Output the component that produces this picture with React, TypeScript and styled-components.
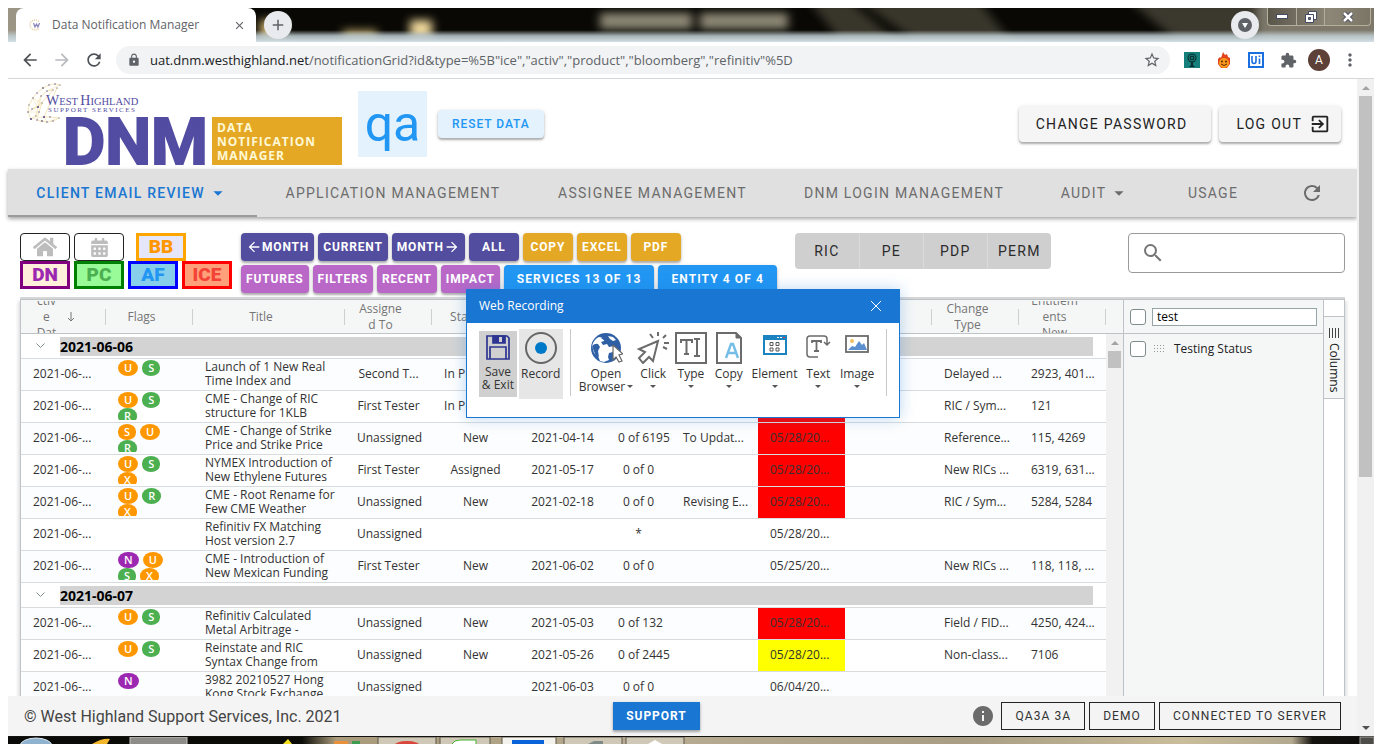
import React from "react";
import styled, { createGlobalStyle } from "styled-components";
import {
  MdArrowBack,
  MdArrowForward,
  MdArrowDropDown,
  MdClose,
  MdExitToApp,
  MdExtension,
  MdInfo,
  MdLock,
  MdMoreVert,
  MdRefresh,
  MdSearch,
  MdStarBorder,
  MdAdd,
} from "react-icons/md";
import { FaHome, FaCalendarAlt } from "react-icons/fa";

const ui = '"Open Sans", "Noto Sans", sans-serif';
const roboto = 'Roboto, "Liberation Sans", sans-serif';

const GlobalStyle = createGlobalStyle`
  * { box-sizing: border-box; }
  body { margin: 0; background: #fff; font-family: ${roboto}; color: #222; }
  button, input { font-family: inherit; margin: 0; }
  button { cursor: pointer; }
`;

const Screen = styled.div`
  height: 100vh;
  padding: 8px 8px 0;
  display: flex;
  flex-direction: column;
  overflow: hidden;
`;

/* ---------- browser frame ---------- */

const TitleBar = styled.header`
  position: relative;
  flex: none;
  height: 34px;
  padding-left: 8px;
  display: flex;
  align-items: center;
  overflow: hidden;
  background: #0b0a07;
`;

const Wallpaper = styled.svg`
  position: absolute;
  inset: 0;
  width: 100%;
  height: 100%;
`;

const BrowserTab = styled.div`
  position: relative;
  width: 240px;
  height: 34px;
  padding: 0 10px 0 13px;
  display: flex;
  align-items: center;
  gap: 9px;
  background: #fff;
  border-radius: 8px 8px 0 0;
  font: 12px/16px ${ui};
  color: #5f6368;
  span { flex: 1; }
`;

const PlainButton = styled.button`
  display: flex;
  align-items: center;
  justify-content: center;
  padding: 0;
  border: 0;
  background: none;
  color: inherit;
`;

const RoundButton = styled(PlainButton)`
  position: relative;
  width: 28px;
  height: 28px;
  margin-left: 8px;
  border-radius: 50%;
  background: #e8eaed;
  color: #5f6368;
`;

const TitleSpacer = styled.div`
  flex: 1;
`;

const WindowButtons = styled.div`
  position: relative;
  align-self: flex-start;
  display: flex;
  height: 18px;
  margin: 0 3px 0 8px;
  border: 1px solid #b4ae9c;
  border-top: 0;
  border-radius: 0 0 4px 4px;
  background: linear-gradient(90deg, #5a564a, #8d8778 60%, #7b7566);
`;

const WindowButton = styled(PlainButton)<{ $wide?: boolean }>`
  width: ${(p) => (p.$wide ? 46 : 28)}px;
  & + & { border-left: 1px solid #b4ae9c; }
`;

const AddressBar = styled.div`
  flex: none;
  height: 37px;
  padding: 0 12px;
  display: flex;
  align-items: center;
  background: #fff;
  border-bottom: 1px solid #d5d7da;
  color: #5f6368;
`;

const NavButton = styled(PlainButton)<{ $off?: boolean }>`
  width: 20px;
  height: 28px;
  margin-right: 12px;
  color: ${(p) => (p.$off ? "#b9bbbe" : "#4d5156")};
`;

const Omnibox = styled.div`
  flex: 1;
  height: 28px;
  padding: 0 9px 0 11px;
  display: flex;
  align-items: center;
  gap: 9px;
  border-radius: 14px;
  background: #f1f3f4;
  font: 13px/18px ${ui};
  color: #5f6368;
  p { flex: 1; margin: 0; white-space: nowrap; overflow: hidden; }
  b { font-weight: 400; color: #202124; }
`;

const Extensions = styled.div`
  display: flex;
  align-items: center;
  gap: 8px;
  margin-left: 10px;
`;

const ExtButton = styled(PlainButton)`
  width: 24px;
  height: 24px;
`;

const Avatar = styled.span`
  width: 22px;
  height: 22px;
  border-radius: 50%;
  background: #5d4037;
  color: #fff;
  font: 12px/22px ${roboto};
  text-align: center;
`;

const Viewport = styled.div`
  position: relative;
  flex: 1;
  min-height: 0;
  display: flex;
`;

const ScrollTrack = styled.div`
  flex: none;
  width: 17px;
  display: flex;
  flex-direction: column;
  align-items: center;
  background: #f1f1f1;
`;

const ScrollArrow = styled.span<{ $down?: boolean }>`
  width: 17px;
  height: 17px;
  display: flex;
  align-items: center;
  justify-content: center;
  &::after {
    content: "";
    border: 4px solid transparent;
    ${(p) => (p.$down ? "border-top-color: #505050; border-bottom: 0;" : "border-bottom-color: #a3a3a3; border-top: 0;")}
  }
`;

const ScrollThumb = styled.span<{ $size: string }>`
  width: 13px;
  height: ${(p) => p.$size};
  margin-bottom: auto;
  background: #c1c1c1;
`;

/* ---------- application ---------- */

const AppPage = styled.main`
  flex: 1;
  min-width: 0;
  display: flex;
  flex-direction: column;
  background: #fff;
`;

const AppHeader = styled.div`
  flex: none;
  height: 90px;
  padding: 0 16px 0 14px;
  display: flex;
  align-items: center;
`;

const Logo = styled.svg`
  width: 322px;
  height: 90px;
  flex: none;
`;

const Env = styled.div`
  width: 69px;
  height: 66px;
  margin-left: 14px;
  background: #e3f2fd;
  color: #2196f3;
  font: 50px/66px ${roboto};
  text-align: center;
`;

const RaisedButton = styled.button`
  border: 0;
  border-radius: 4px;
  box-shadow: 0 2px 2px rgba(0, 0, 0, 0.25), 0 1px 4px rgba(0, 0, 0, 0.15);
  font-family: ${roboto};
  font-weight: 500;
  white-space: nowrap;
`;

const ResetButton = styled(RaisedButton)`
  height: 28px;
  margin: 0 auto 0 11px;
  padding: 0 14px;
  background: #e3f2fd;
  color: #2196f3;
  font-size: 12px;
  letter-spacing: 0.08em;
`;

const AccountButton = styled(RaisedButton)<{ $icon?: boolean }>`
  height: 36px;
  margin-left: 8px;
  padding: 0 ${(p) => (p.$icon ? 10 : 24)}px 0 17px;
  display: flex;
  align-items: center;
  gap: 7px;
  background: #f5f5f5;
  color: #222;
  font-size: 14px;
  font-weight: 400;
  letter-spacing: 0.09em;
`;

const TabBar = styled.nav`
  flex: none;
  height: 48px;
  display: flex;
  background: #e0e0e0;
  box-shadow: 0 2px 4px rgba(0, 0, 0, 0.35);
`;

const NavTab = styled.a<{ $share: number; $active?: boolean }>`
  flex: ${(p) => p.$share} 1 0;
  display: flex;
  align-items: center;
  justify-content: center;
  gap: 2px;
  box-shadow: ${(p) => (p.$active ? "inset 0 -2px 0 #9b9b9b" : "none")};
  color: ${(p) => (p.$active ? "#1976d2" : "#6c6c6c")};
  font-size: 14px;
  font-weight: ${(p) => (p.$active ? 500 : 400)};
  letter-spacing: 0.09em;
  white-space: nowrap;
  text-decoration: none;
`;

const Controls = styled.section`
  flex: none;
  height: 80px;
  padding: 16px 12px 0;
  display: flex;
  align-items: flex-start;
`;

const Stack = styled.div<{ $gap: number }>`
  display: flex;
  flex-direction: column;
  gap: ${(p) => p.$gap}px;
  margin-right: 9px;
`;

const ButtonRow = styled.div`
  display: flex;
  gap: 4px;
`;

const IconTile = styled(PlainButton)`
  width: 50px;
  height: 28px;
  border: 1px solid #222;
  border-radius: 4px;
  color: #bdbdbd;
`;

const SourceTile = styled.button<{ $line: string; $fill: string; $ink: string; $apart?: boolean }>`
  width: 50px;
  height: 28px;
  margin-left: ${(p) => (p.$apart ? 8 : 0)}px;
  padding: 0;
  border: 3px solid ${(p) => p.$line};
  background: ${(p) => p.$fill};
  color: ${(p) => p.$ink};
  font: 900 19px/22px ${roboto};
`;

const ToolButton = styled(RaisedButton)<{ $tone: string; $roomy?: boolean }>`
  height: 28px;
  min-width: 50px;
  padding: 0 ${(p) => (p.$roomy ? 13 : 5)}px;
  display: flex;
  align-items: center;
  justify-content: center;
  background: ${(p) => p.$tone};
  color: #fff;
  font-size: 12px;
  font-weight: 700;
  letter-spacing: ${(p) => (p.$roomy ? "0.09em" : "0.07em")};
`;

const Segments = styled.div`
  display: flex;
  flex: none;
  margin-left: 9px;
  border-radius: 4px;
  overflow: hidden;
`;

const Segment = styled.button`
  width: 64px;
  height: 36px;
  padding: 0;
  border: 0;
  background: #cfcfcf;
  color: #2b2b2b;
  font-size: 14px;
  letter-spacing: 0.09em;
  & + & { border-left: 1px solid #dadada; }
`;

const SearchBox = styled.label`
  flex: none;
  display: flex;
  align-items: center;
  width: 217px;
  height: 40px;
  margin-left: auto;
  padding: 0 12px;
  border: 1px solid #9a9a9a;
  border-radius: 4px;
  color: #757575;
  input { flex: 1; min-width: 0; border: 0; outline: 0; background: none; font-size: 16px; }
`;

/* ---------- grid ---------- */

const Grid = styled.section`
  flex: 1;
  min-height: 0;
  margin: 2px 12px 0;
  display: flex;
  overflow: hidden;
  border: 1px solid #bdc3c7;
  border-bottom: 0;
  box-shadow: 0 -2px 0 #d6d6d6, 2px 2px 3px rgba(0, 0, 0, 0.12), -2px 2px 3px rgba(0, 0, 0, 0.12);
  font: 12px/16px ${ui};
  color: #333;
`;

const TableWrap = styled.div`
  flex: 1;
  min-width: 0;
  overflow: hidden;
`;

const Table = styled.table`
  width: 100%;
  table-layout: fixed;
  border-collapse: separate;
  border-spacing: 0;
`;

const HeadCell = styled.th`
  height: 34px;
  padding: 0 28px 0 12px;
  border-bottom: 1px solid #bdc3c7;
  background: linear-gradient(#ccd0d2, #ccd0d2) right center / 1px 16px no-repeat, #f5f7f7;
  color: #757575;
  font-weight: 400;
`;

const HeadText = styled.div`
  height: 32px;
  display: flex;
  align-items: center;
  justify-content: center;
  gap: 10px;
  overflow: hidden;
  text-align: center;
  word-break: break-word;
  svg { flex: none; }
`;

const GroupCell = styled.td`
  height: 25px;
  padding: 0 13px 0 15px;
  border-bottom: 1px solid #d9dcde;
`;

const GroupLine = styled.div`
  display: flex;
  align-items: center;
  gap: 15px;
`;

const GroupLabel = styled.strong`
  flex: 1;
  height: 19px;
  background: #d3d3d3;
  color: #000;
  font: 700 14px/19px ${ui};
`;

const BodyRow = styled.tr<{ $shade: boolean }>`
  background: ${(p) => (p.$shade ? "#fcfdfe" : "#fff")};
`;

const Cell = styled.td<{ $fill?: string; $center?: boolean }>`
  height: 32px;
  padding: 0 12px 2px;
  border-bottom: 1px solid #d9dcde;
  background: ${(p) => p.$fill || "transparent"};
  text-align: ${(p) => (p.$center ? "center" : "left")};
  white-space: nowrap;
`;

const TitleText = styled.div`
  height: 29px;
  margin-right: -8px;
  padding-top: 1px;
  overflow: hidden;
  line-height: 14px;
`;

const FlagList = styled.div`
  height: 29px;
  padding-top: 1px;
  display: flex;
  flex-wrap: wrap;
  align-content: flex-start;
  column-gap: 4px;
  overflow: hidden;
`;

const Flag = styled.span<{ $tone: string }>`
  height: 16px;
  padding: 0 6px;
  border-radius: 10px / 8px;
  background: ${(p) => p.$tone};
  color: #fff;
  font: 600 11px/16px ${ui};
`;

const GridScroll = styled(ScrollTrack)`
  &::before {
    content: "";
    flex: none;
    width: 100%;
    height: 33px;
    background: #f5f7f7;
    border-bottom: 1px solid #bdc3c7;
  }
`;

const ColumnPanel = styled.aside`
  flex: none;
  width: 201px;
  border: solid #bdc3c7;
  border-width: 0 1px;
  background: #f5f7f7;
  color: #222;
`;

const PanelRow = styled.div<{ $head?: boolean }>`
  height: ${(p) => (p.$head ? 34 : 30)}px;
  padding: 0 6px;
  display: flex;
  align-items: center;
  gap: ${(p) => (p.$head ? 6 : 8)}px;
  border-bottom: ${(p) => (p.$head ? "1px solid #bdc3c7" : "0")};
`;

const Check = styled.input`
  appearance: none;
  flex: none;
  width: 16px;
  height: 16px;
  border: 1px solid #7f8c8d;
  border-radius: 3px;
  background: #fff;
`;

const PanelInput = styled.input`
  flex: 1;
  min-width: 0;
  height: 18px;
  padding: 0 4px;
  border: 1px solid #95a5a6;
  background: #fff;
  color: #000;
  font: 12px/16px ${ui};
`;

const SideTabs = styled.div`
  flex: none;
  width: 20px;
  padding-top: 16px;
  background: #fff;
`;

const SideTab = styled.button`
  width: 100%;
  height: 83px;
  padding: 11px 0 0;
  display: flex;
  flex-direction: column;
  align-items: center;
  gap: 4px;
  border: solid #bdc3c7;
  border-width: 1px 0;
  background: #f5f7f7;
  color: #222;
  font: 12px/16px ${ui};
  span { writing-mode: vertical-rl; }
`;

/* ---------- footer ---------- */

const Footer = styled.footer`
  position: relative;
  flex: none;
  height: 40px;
  padding: 0 16px;
  display: flex;
  align-items: center;
  justify-content: space-between;
  background: #f4f4f4;
  color: #444;
  font-size: 16px;
`;

const SupportButton = styled(RaisedButton)`
  height: 28px;
  padding: 0 13px;
  border-radius: 0;
  background: #1976d2;
  color: #fff;
  font-size: 12px;
  font-weight: 700;
  letter-spacing: 0.08em;
`;

const StatusList = styled.div`
  display: flex;
  align-items: center;
  gap: 4px;
  color: #6b6b6b;
`;

const StatusButton = styled.button`
  height: 28px;
  padding: 0 13px;
  border: 1px solid #222;
  background: none;
  color: #333;
  font: 12px/16px ${roboto};
  letter-spacing: 0.09em;
`;

const InfoMark = styled(MdInfo)`
  margin-right: 2px;
`;

const Taskbar = styled.svg`
  display: block;
  flex: none;
  width: 100%;
  height: 8px;
`;

/* ---------- recorder window ---------- */

const Recorder = styled.section`
  position: absolute;
  top: 210px;
  left: 458px;
  width: 434px;
  height: 129px;
  border: 1px solid #1976d2;
  background: #fff;
  box-shadow: 0 0 14px rgba(25, 118, 210, 0.3);
  font: 12px/13px ${ui};
  color: #333;
`;

const RecorderTitle = styled.div`
  height: 33px;
  padding: 0 17px 2px 12px;
  display: flex;
  align-items: center;
  justify-content: space-between;
  background: #1976d2;
  color: #fff;
`;

const RecorderTools = styled.div`
  display: flex;
  align-items: flex-start;
  padding: 6px 12px 0;
`;

const Tool = styled.button<{ $w: number; $fill?: string; $short?: boolean }>`
  width: ${(p) => p.$w}px;
  height: ${(p) => (p.$short ? 66 : 70)}px;
  margin: ${(p) => (p.$short ? "2px 2px 0 0" : "0")};
  padding: ${(p) => (p.$short ? 2 : 1)}px 0 0;
  display: flex;
  flex-direction: column;
  align-items: center;
  gap: ${(p) => (p.$short ? 2 : 3)}px;
  border: 0;
  background: ${(p) => p.$fill || "none"};
  color: #333;
  font: 12px/13px ${ui};
  white-space: nowrap;
  svg { flex: none; }
`;

const ToolLabel = styled.span`
  display: flex;
  flex-direction: column;
  align-items: center;
`;

const WithCaret = styled.span`
  display: flex;
  align-items: center;
  gap: 2px;
`;

const Caret = styled.i`
  border: 3px solid transparent;
  border-top-color: #555;
  border-bottom: 0;
`;

const CaretLine = styled.span`
  height: 13px;
  display: flex;
  align-items: center;
`;

const Rule = styled.span<{ $before: number; $after: number }>`
  width: 1px;
  height: 67px;
  margin: 0 ${(p) => p.$after}px 0 ${(p) => p.$before}px;
  background: #c8c8c8;
`;

/* ---------- data ---------- */

const orange = "#ff9800";
const green = "#4caf50";
const purple = "#9c27b0";
type FlagDef = [string, string];
const U: FlagDef = ["U", orange];
const S: FlagDef = ["S", green];
const R: FlagDef = ["R", green];
const X: FlagDef = ["X", orange];
const N: FlagDef = ["N", purple];
const SO: FlagDef = ["S", orange];

interface Notice {
  flags: FlagDef[];
  title: [string, string];
  who: string;
  status: string;
  date: string;
  count: string;
  note: string;
  due: string;
  fill?: string;
  change: string;
  codes: string;
}

const row = (
  flags: FlagDef[],
  title: [string, string],
  who: string,
  status: string,
  date: string,
  count: string,
  note: string,
  due: string,
  fill: string | undefined,
  change: string,
  codes: string
): Notice => ({ flags, title, who, status, date, count, note, due, fill, change, codes });

const d28 = "05/28/20...";
const un = "Unassigned";

const groups: { day: string; rows: Notice[] }[] = [
  {
    day: "2021-06-06",
    rows: [
      row([U, S], ["Launch of 1 New Real", "Time Index and"], "Second T...", "In Progress", "", "", "", "", "red", "Delayed ...", "2923, 401..."),
      row([U, S, R], ["CME - Change of RIC", "structure for 1KLB"], "First Tester", "In Progress", "", "", "", "", "red", "RIC / Sym...", "121"),
      row([SO, U, R], ["CME - Change of Strike", "Price and Strike Price"], un, "New", "2021-04-14", "0 of 6195", "To Updat...", d28, "red", "Reference...", "115, 4269"),
      row([U, S, X], ["NYMEX Introduction of", "New Ethylene Futures"], "First Tester", "Assigned", "2021-05-17", "0 of 0", "", d28, "red", "New RICs ...", "6319, 631..."),
      row([U, R, X], ["CME - Root Rename for", "Few CME Weather"], un, "New", "2021-02-18", "0 of 0", "Revising E...", d28, "red", "RIC / Sym...", "5284, 5284"),
      row([], ["Refinitiv FX Matching", "Host version 2.7"], un, "", "", "*", "", d28, undefined, "", ""),
      row([N, U, S, X], ["CME - Introduction of", "New Mexican Funding"], "First Tester", "New", "2021-06-02", "0 of 0", "", "05/25/20...", undefined, "New RICs ...", "118, 118, ..."),
    ],
  },
  {
    day: "2021-06-07",
    rows: [
      row([U, S], ["Refinitiv Calculated", "Metal Arbitrage -"], un, "New", "2021-05-03", "0 of 132", "", d28, "red", "Field / FID...", "4250, 424..."),
      row([U, S], ["Reinstate and RIC", "Syntax Change from"], un, "New", "2021-05-26", "0 of 2445", "", d28, "yellow", "Non-class...", "7106"),
      row([N], ["3982 20210527 Hong", "Kong Stock Exchange"], un, "", "2021-06-03", "0 of 0", "", "06/04/20...", undefined, "", ""),
    ],
  },
];

const columns: [string, number][] = [
  ["", 85], ["Flags", 87], ["Title", 152], ["Assigned To", 87], ["Status", 87], ["", 87],
  ["", 65], ["", 87], ["", 87], ["", 87], ["Change Type", 87], ["Entitlements New", 87],
];

/* ---------- drawings ---------- */

const globe: [number, number][] = [
  [38, 6], [33, 5], [27, 6], [21, 9], [15, 14], [11, 19], [7, 26], [6, 33], [9, 40], [14, 37], [19, 17], [25, 12], [31, 11],
  [16, 28], [10, 30], [20, 24], [17, 33], [15, 41], [20, 42], [25, 43], [31, 42], [37, 39], [28, 38], [22, 38], [35, 9],
];

const LogoArt = () => (
  <Logo viewBox="0 0 322 90" role="img" aria-label="West Highland Support Services DNM">
    <polyline points={globe.map((p) => p.join(",")).join(" ")} fill="none" stroke="#f3e6bb" strokeWidth="1" />
    <polyline points="38,6 25,12 19,17 15,24 20,24 10,19 16,28 6,33 17,33 9,40 22,38 25,43 37,39" fill="none" stroke="#f6edcf" strokeWidth="1" />
    {globe.map(([x, y], i) => (
      <circle key={i} cx={x} cy={y} r={i % 5 === 3 ? 1.1 : 0.7} fill={i % 3 ? "#5b4a83" : "#8a7f86"} />
    ))}
    <g fill="#524ca2" fontFamily="'Liberation Serif', serif">
      <text x="24" y="26" fontSize="14">W<tspan fontSize="10.500">EST </tspan>H<tspan fontSize="10.500">IGHLAND</tspan></text>
      <text x="26" y="33" fontSize="7" letterSpacing="1.500">SUPPORT SERVICES</text>
    </g>
    <text x="41" y="85" fontSize="65" fontWeight="700" fontFamily="Roboto, sans-serif" fill="#524ca2" stroke="#524ca2" strokeWidth="2">DNM</text>
    <rect x="190" y="38" width="130" height="48" fill="#e4a825" />
    <g fill="#fff8d5" fontFamily="'Open Sans', sans-serif" fontSize="12" fontWeight="700" letterSpacing="1">
      <text x="195" y="53">DATA</text>
      <text x="195" y="67">NOTIFICATION</text>
      <text x="195" y="81">MANAGER</text>
    </g>
  </Logo>
);

const FavIcon = () => (
  <svg width="14" height="14" viewBox="0 0 14 14">
    <circle cx="6" cy="7" r="5" fill="none" stroke="#e3cda3" strokeWidth="1.500" strokeDasharray="1 1" />
    <rect x="4" y="4" width="9" height="6" fill="#fff" />
    <path d="M4.500 5l1.500 4 1.500-3 1.500 3 1.500-4" fill="none" stroke="#8a82bb" strokeWidth="1.200" />
  </svg>
);

const TitleArt = () => (
  <Wallpaper viewBox="0 0 1366 34" preserveAspectRatio="none">
    <defs>
      <filter id="soft" x="-20%" y="-50%" width="140%" height="200%"><feGaussianBlur stdDeviation="5 4" /></filter>
      <linearGradient id="glass" x1="0" y1="0" x2="0" y2="1">
        <stop offset="0.650" stopColor="#c8d6da" stopOpacity="0" />
        <stop offset="0.820" stopColor="#c0ced3" stopOpacity="0.850" />
        <stop offset="1" stopColor="#d3e0e5" />
      </linearGradient>
    </defs>
    <rect width="1366" height="34" fill="#090804" />
    <g filter="url(#soft)">
      <rect x="-10" y="-10" width="30" height="54" fill="#9b9585" />
      <rect x="252" y="12" width="24" height="20" fill="#cdb271" />
      <rect x="335" y="22" width="34" height="10" fill="#b09a60" />
      <rect x="402" y="12" width="22" height="18" fill="#ecd59a" />
      <rect x="592" y="5" width="92" height="16" fill="#8c8775" />
      <rect x="692" y="5" width="88" height="16" fill="#8c8775" />
      <path d="M800 -8h40l60 50h-60zM850-8h120l40 50h-90z" fill="#39352c" />
      <path d="M1120-8h260v50h-200z" fill="#3a372d" />
      <rect x="1250" y="-8" width="130" height="50" fill="#7d786a" />
    </g>
    <rect width="1366" height="34" fill="url(#glass)" />
  </Wallpaper>
);

const TaskArt = () => (
  <Taskbar viewBox="0 0 1366 8" preserveAspectRatio="none">
    <defs>
      <linearGradient id="task" x1="0" x2="1" y1="0" y2="0">
        <stop offset="0" stopColor="#0a0a08" />
        <stop offset="0.215" stopColor="#0a0a06" />
        <stop offset="0.240" stopColor="#a89a7a" />
        <stop offset="0.480" stopColor="#b7ac92" />
        <stop offset="0.700" stopColor="#a99d84" />
        <stop offset="0.860" stopColor="#c9bd9b" />
        <stop offset="0.940" stopColor="#b3a98f" />
        <stop offset="0.955" stopColor="#15130f" />
        <stop offset="1" stopColor="#0a0a0a" />
      </linearGradient>
    </defs>
    <rect width="1366" height="8" fill="url(#task)" />
    <ellipse cx="28" cy="10" rx="16" ry="8" fill="#8fb2cf" stroke="#dfe9f0" />
    <path d="M84 8q10-6 18-5l-3 5z" fill="#f1b62c" />
    <rect x="122" y="1" width="57" height="8" fill="#8d8c88" stroke="#c8c8c4" />
    <path d="M275 8l5-5 4 5z" fill="#f4e01e" />
    <path d="M326 8v-3h14v3z" fill="#e8913a" />
    <path d="M344 8v-3h8v3z" fill="#3f9a52" />
    <g fill="#cfc8b7" stroke="#5f594b">
      <rect x="370" y="1" width="58" height="9" />
      <rect x="432" y="1" width="50" height="9" />
      <rect x="494" y="1" width="54" height="9" fill="#f4f2ec" />
      <rect x="556" y="1" width="58" height="9" />
      <rect x="618" y="1" width="58" height="9" />
    </g>
    <ellipse cx="399" cy="10" rx="13" ry="5" fill="#d8463c" />
    <path d="M444 8q2-4 8-4h16v4" fill="#fff" stroke="#46b02e" />
    <rect x="504" y="4" width="32" height="4" fill="#0b63dc" />
    <path d="M580 8l6-3h9v3z" fill="#7f8b86" />
    <path d="M640 8l7-4 7 4z" fill="#fff" />
    <rect width="1366" height="1" fill="#141210" />
    <rect x="1352" y="1" width="14" height="8" fill="#4e4c48" stroke="#a6a39c" />
  </Taskbar>
);

const SaveIcon = () => (
  <svg width="26" height="30" viewBox="0 0 26 30" fill="none" stroke="#2d3591" strokeWidth="1.700">
    <path d="M2 3h20l2 2v21H2z" />
    <path d="M8 3h12v7H8z" fill="#2d3591" />
    <rect x="14" y="4" width="3" height="5" fill="#d0d0d0" stroke="none" />
    <path d="M5 26V14h16v12" />
  </svg>
);

const RecordIcon = () => (
  <svg width="34" height="34" viewBox="0 0 34 34">
    <circle cx="17" cy="18" r="15" fill="none" stroke="#666" strokeWidth="2" />
    <circle cx="17" cy="18" r="6" fill="#0079c9" />
  </svg>
);

const BrowserIcon = () => (
  <svg width="34" height="34" viewBox="0 0 34 34">
    <circle cx="17" cy="18" r="15" fill="#2f5fa5" />
    <path d="M3 16q2-7 7-9l6 1-1 3-3 1 2 3 4-1 2 3 5-1 3 3-4 3-4 1-1 4 1 3-5 2-4-1-2-5-4-3-1-4zM19 6l5 1 3 3-3 1-3-2z" fill="#fff" />
    <path d="M3 16q3-3 6-2l2 3-2 4 1 6-4-3zM12 8l5-3 2 4-3 2z" fill="#2f5fa5" />
    <path d="M24 15v15l3-3 3 5 3-1-3-6 4-1z" fill="#fff" stroke="#666" strokeWidth="1.200" />
  </svg>
);

const ClickIcon = () => (
  <svg width="34" height="34" viewBox="0 0 34 34" fill="none" stroke="#6b6b6b" strokeWidth="2">
    <path d="M22 11L3 19l6 3-6 6 4 5 6-6 4 4z" />
    <path d="M17 8l-3-4M22 6V2M27 8l3-3M28 13h5M27 17l4 2" />
  </svg>
);

const TypeIcon = () => (
  <svg width="34" height="34" viewBox="0 0 34 34">
    <rect x="2" y="3" width="30" height="30" fill="#fff" stroke="#6b6b6b" strokeWidth="2" />
    <path d="M7 13v-3h11v3M12.500 10v14M10 24h5M20 9h6M23 9v17M20 26h6" fill="none" stroke="#6b6b6b" strokeWidth="2" />
  </svg>
);

const CopyIcon = () => (
  <svg width="30" height="34" viewBox="0 0 30 34">
    <path d="M3 3h19l5 5v25H3z" fill="#fff" stroke="#6b6b6b" strokeWidth="2" />
    <path d="M22 3v5h5" fill="#6b6b6b" stroke="#6b6b6b" />
    <path d="M12 28l5-14h2l5 14M14 23h8" fill="none" stroke="#74bde6" strokeWidth="2.400" />
  </svg>
);

const ElementIcon = () => (
  <svg width="26" height="34" viewBox="0 0 26 34">
    <rect x="2" y="6" width="22" height="18" fill="#fff" stroke="#1b83bf" strokeWidth="2" />
    <rect x="1" y="5" width="24" height="5" fill="#1b83bf" />
    <path d="M15 7.500h2M18 7.500h2" stroke="#fff" />
    <path d="M21 7.500h2" stroke="#e53935" />
    <path d="M8 12.500h3v3H8zM14 12.500h3v3h-3zM8 18h3v3H8zM14 18h3v3h-3z" fill="none" stroke="#555" />
  </svg>
);

const TextIcon = () => (
  <svg width="28" height="34" viewBox="0 0 28 34" fill="none" stroke="#6b6b6b" strokeWidth="1.500">
    <path d="M14 27H6q-3 0-3-3V9q0-3 3-3h14q3 0 3 3v6M20 12l3 3 3-3" />
    <path d="M8 13v-2h9v2M12.500 11v10M10 21h5" strokeWidth="1.800" />
  </svg>
);

const ImageIcon = () => (
  <svg width="26" height="34" viewBox="0 0 26 34">
    <rect x="2" y="6" width="22" height="16" fill="#fff" stroke="#6b6b6b" strokeWidth="1.800" />
    <circle cx="8" cy="11" r="2" fill="#f0c060" />
    <path d="M4 20l4-4 3 1 4-6 3 4 2-2 3 7z" fill="#5b8fd0" />
  </svg>
);

const menuTools: [string, number, React.FC][] = [
  ["Click", 38, ClickIcon],
  ["Type", 38, TypeIcon],
  ["Copy", 38, CopyIcon],
  ["Element", 54, ElementIcon],
  ["Text", 34, TextIcon],
  ["Image", 44, ImageIcon],
];

const violet = "#534da0";
const gold = "#e4a824";
const orchid = "#ba68c8";
const blue = "#2196f3";

export default function App() {
  return (
    <Screen>
      <GlobalStyle />
      <TitleBar>
        <TitleArt />
        <BrowserTab>
          <FavIcon />
          <span>Data Notification Manager</span>
          <PlainButton aria-label="Close tab"><MdClose size={13} /></PlainButton>
        </BrowserTab>
        <RoundButton aria-label="New tab"><MdAdd size={18} /></RoundButton>
        <TitleSpacer />
        <RoundButton aria-label="Search tabs">
          <svg width="14" height="14"><circle cx="7" cy="7" r="7" fill="#5f6368" /><path d="M4 5h6l-3 5z" fill="#fff" /></svg>
        </RoundButton>
        <WindowButtons>
          <WindowButton aria-label="Minimize"><svg width="12" height="5"><rect x="0.500" y="0.500" width="11" height="4" fill="#fff" stroke="#444a62" /></svg></WindowButton>
          <WindowButton aria-label="Restore"><svg width="12" height="12" fill="none" stroke="#444a62"><path d="M3.500 3V.5h8v8H9" fill="#fff" /><path d="M.5 3.500h8v8h-8z" fill="#fff" /><path d="M3.500 6.500h2v2h-2z" fill="#777" /></svg></WindowButton>
          <WindowButton $wide aria-label="Close"><svg width="12" height="12"><path d="M2 2l8 8M10 2l-8 8" stroke="#444a62" strokeWidth="4.500" /><path d="M2 2l8 8M10 2l-8 8" stroke="#fff" strokeWidth="2.500" /></svg></WindowButton>
        </WindowButtons>
      </TitleBar>

      <AddressBar>
        <NavButton aria-label="Back"><MdArrowBack size={20} /></NavButton>
        <NavButton $off aria-label="Forward"><MdArrowForward size={20} /></NavButton>
        <NavButton aria-label="Reload"><MdRefresh size={20} /></NavButton>
        <Omnibox>
          <MdLock size={14} />
          <p><b>uat.dnm.westhighland.net</b>{'/notificationGrid?id&type=%5B"ice","activ","product","bloomberg","refinitiv"%5D'}</p>
          <MdStarBorder size={18} />
        </Omnibox>
        <Extensions>
          <ExtButton aria-label="Tree">
            <svg width="16" height="16"><rect width="16" height="16" fill="#15807b" /><path d="M7 9h2v4l2 2H5l2-2z" fill="#0b2f2e" /><circle cx="8" cy="6" r="4.500" fill="#0b3534" /><circle cx="8" cy="6" r="3" fill="none" stroke="#17918b" strokeWidth="0.800" /><circle cx="8" cy="6" r="1" fill="#17918b" /></svg>
          </ExtButton>
          <ExtButton aria-label="Flame">
            <svg width="14" height="17" viewBox="0 0 14 17"><path d="M6 0l2 3 2-1 1 3 2 1v6l-3 4H4l-3-4V7l2-2 1 1z" fill="#e5431b" /><circle cx="7" cy="11" r="5" fill="#f79a1d" /><path d="M4 12q3 3 6 0" fill="none" stroke="#5a2508" /><circle cx="5" cy="9.500" r="1" fill="#5a2508" /><circle cx="9" cy="9.500" r="1" fill="#5a2508" /></svg>
          </ExtButton>
          <ExtButton aria-label="Ui">
            <svg width="16" height="16"><rect x="1" y="1" width="14" height="14" fill="#fff" stroke="#1a6fe0" strokeWidth="2" /><path d="M4 4v5q0 2.500 2 2.500T8 9V4M11.500 6.500V12M11.500 3.500v1.500" fill="none" stroke="#1a6fe0" strokeWidth="1.600" /></svg>
          </ExtButton>
          <ExtButton aria-label="Extensions"><MdExtension size={17} /></ExtButton>
          <Avatar>A</Avatar>
          <ExtButton aria-label="Menu"><MdMoreVert size={20} /></ExtButton>
        </Extensions>
      </AddressBar>

      <Viewport>
        <AppPage>
          <AppHeader>
            <LogoArt />
            <Env>qa</Env>
            <ResetButton>RESET DATA</ResetButton>
            <AccountButton>CHANGE PASSWORD</AccountButton>
            <AccountButton $icon>LOG OUT<MdExitToApp size={22} /></AccountButton>
          </AppHeader>

          <TabBar>
            <NavTab href="#review" $share={249} $active>CLIENT EMAIL REVIEW<MdArrowDropDown size={22} /></NavTab>
            <NavTab href="#apps" $share={272}>APPLICATION MANAGEMENT</NavTab>
            <NavTab href="#assignees" $share={247}>ASSIGNEE MANAGEMENT</NavTab>
            <NavTab href="#logins" $share={256}>DNM LOGIN MANAGEMENT</NavTab>
            <NavTab href="#audit" $share={127}>AUDIT<MdArrowDropDown size={22} /></NavTab>
            <NavTab href="#usage" $share={108}>USAGE</NavTab>
            <NavTab href="#refresh" aria-label="Refresh" $share={90}><MdRefresh size={24} /></NavTab>
          </TabBar>

          <Controls>
            <Stack $gap={0}>
              <ButtonRow>
                <IconTile aria-label="Home"><FaHome size={24} /></IconTile>
                <IconTile aria-label="Calendar"><FaCalendarAlt size={19} /></IconTile>
                <SourceTile $apart $line="#ffa500" $fill="#e6e6fa" $ink="#ff9800">BB</SourceTile>
              </ButtonRow>
              <ButtonRow>
                <SourceTile $line="#800080" $fill="#ffefdb" $ink="#9c27b0">DN</SourceTile>
                <SourceTile $line="#008000" $fill="#98fb98" $ink="#4caf50">PC</SourceTile>
                <SourceTile $line="#0000ff" $fill="#87ceeb" $ink="#2196f3">AF</SourceTile>
                <SourceTile $line="#ff0000" $fill="#ffa07a" $ink="#f44336">ICE</SourceTile>
              </ButtonRow>
            </Stack>
            <Stack $gap={4}>
              <ButtonRow>
                <ToolButton $tone={violet}><MdArrowBack size={16} />MONTH</ToolButton>
                <ToolButton $tone={violet}>CURRENT</ToolButton>
                <ToolButton $tone={violet}>MONTH<MdArrowForward size={16} /></ToolButton>
                <ToolButton $tone={violet}>ALL</ToolButton>
                <ToolButton $tone={gold}>COPY</ToolButton>
                <ToolButton $tone={gold}>EXCEL</ToolButton>
                <ToolButton $tone={gold}>PDF</ToolButton>
              </ButtonRow>
              <ButtonRow>
                <ToolButton $tone={orchid}>FUTURES</ToolButton>
                <ToolButton $tone={orchid}>FILTERS</ToolButton>
                <ToolButton $tone={orchid}>RECENT</ToolButton>
                <ToolButton $tone={orchid}>IMPACT</ToolButton>
                <ToolButton $tone={blue} $roomy>SERVICES 13 OF 13</ToolButton>
                <ToolButton $tone={blue} $roomy>ENTITY 4 OF 4</ToolButton>
              </ButtonRow>
            </Stack>
            <Segments>
              {["RIC", "PE", "PDP", "PERM"].map((s) => <Segment key={s}>{s}</Segment>)}
            </Segments>
            <SearchBox>
              <MdSearch size={24} />
              <input type="text" aria-label="Search" />
            </SearchBox>
          </Controls>

          <Grid>
            <TableWrap>
              <Table>
                <colgroup>{columns.map(([, w], i) => <col key={i} style={{ width: w }} />)}</colgroup>
                <thead>
                  <tr>
                    {columns.map(([label], i) => (
                      <HeadCell key={i}>
                        <HeadText>
                          {i === 0 ? (
                            <>
                              <span>Effe<br />ctiv<br />e<br />Dat<br />e</span>
                              <svg width="8" height="10" fill="none" stroke="#757575"><path d="M4 0v9M1 6l3 3 3-3" /></svg>
                            </>
                          ) : label}
                        </HeadText>
                      </HeadCell>
                    ))}
                  </tr>
                </thead>
                <tbody>
                  {groups.map((g) => (
                    <React.Fragment key={g.day}>
                      <tr>
                        <GroupCell colSpan={12}>
                          <GroupLine>
                            <svg width="9" height="6" fill="none" stroke="#7f8c8d"><path d="M.5 .5l4 4 4-4" /></svg>
                            <GroupLabel>{g.day}</GroupLabel>
                          </GroupLine>
                        </GroupCell>
                      </tr>
                      {g.rows.map((r, i) => (
                        <BodyRow key={i} $shade={i % 2 === 0}>
                          <Cell>2021-06-...</Cell>
                          <Cell><FlagList>{r.flags.map(([t, c], k) => <Flag key={k} $tone={c}>{t}</Flag>)}</FlagList></Cell>
                          <Cell><TitleText>{r.title[0]}<br />{r.title[1]}</TitleText></Cell>
                          <Cell $center>{r.who}</Cell>
                          <Cell $center>{r.status}</Cell>
                          <Cell $center>{r.date}</Cell>
                          <Cell $center>{r.count}</Cell>
                          <Cell>{r.note}</Cell>
                          <Cell $fill={r.fill}>{r.due}</Cell>
                          <Cell />
                          <Cell>{r.change}</Cell>
                          <Cell>{r.codes}</Cell>
                        </BodyRow>
                      ))}
                    </React.Fragment>
                  ))}
                </tbody>
              </Table>
            </TableWrap>
            <GridScroll><ScrollArrow /><ScrollThumb $size="17px" /></GridScroll>
            <ColumnPanel>
              <PanelRow $head>
                <Check type="checkbox" aria-label="Select all columns" />
                <PanelInput type="text" aria-label="Filter columns" defaultValue="test" />
              </PanelRow>
              <PanelRow as="label">
                <Check type="checkbox" />
                <svg width="12" height="8" stroke="#999" strokeDasharray="1 2"><path d="M0 .5h12M0 3.500h12M0 6.500h12" /></svg>
                Testing Status
              </PanelRow>
            </ColumnPanel>
            <SideTabs>
              <SideTab>
                <svg width="11" height="11" stroke="#444"><path d="M.5 0v10M3.500 0v10M6.500 0v10M9.500 0v10" /></svg>
                <span>Columns</span>
              </SideTab>
            </SideTabs>
          </Grid>

          <Footer>
            <span>© West Highland Support Services, Inc. 2021</span>
            <SupportButton>SUPPORT</SupportButton>
            <StatusList>
              <InfoMark size={24} />
              <StatusButton>QA3A 3A</StatusButton>
              <StatusButton>DEMO</StatusButton>
              <StatusButton>CONNECTED TO SERVER</StatusButton>
            </StatusList>
          </Footer>
        </AppPage>
        <ScrollTrack>
          <ScrollArrow />
          <ScrollThumb $size="58%" />
          <ScrollArrow $down />
        </ScrollTrack>

        <Recorder role="dialog" aria-label="Web Recording">
          <RecorderTitle>
            Web Recording
            <PlainButton aria-label="Close"><svg width="12" height="12" stroke="#fff"><path d="M1 1l10 10M11 1L1 11" /></svg></PlainButton>
          </RecorderTitle>
          <RecorderTools>
            <Tool $w={38} $fill="#d0d0d0" $short><SaveIcon /><ToolLabel><span>Save</span><span>&amp; Exit</span></ToolLabel></Tool>
            <Tool $w={44} $fill="#e6e6e6"><RecordIcon />Record</Tool>
            <Rule $before={7} $after={7} />
            <Tool $w={57}><BrowserIcon /><ToolLabel><span>Open</span><WithCaret>Browser<Caret /></WithCaret></ToolLabel></Tool>
            {menuTools.map(([label, w, Icon]) => (
              <Tool key={label} $w={w}><Icon /><ToolLabel><span>{label}</span><CaretLine><Caret /></CaretLine></ToolLabel></Tool>
            ))}
            <Rule $before={7} $after={0} />
          </RecorderTools>
        </Recorder>
      </Viewport>
      <TaskArt />
    </Screen>
  );
}
